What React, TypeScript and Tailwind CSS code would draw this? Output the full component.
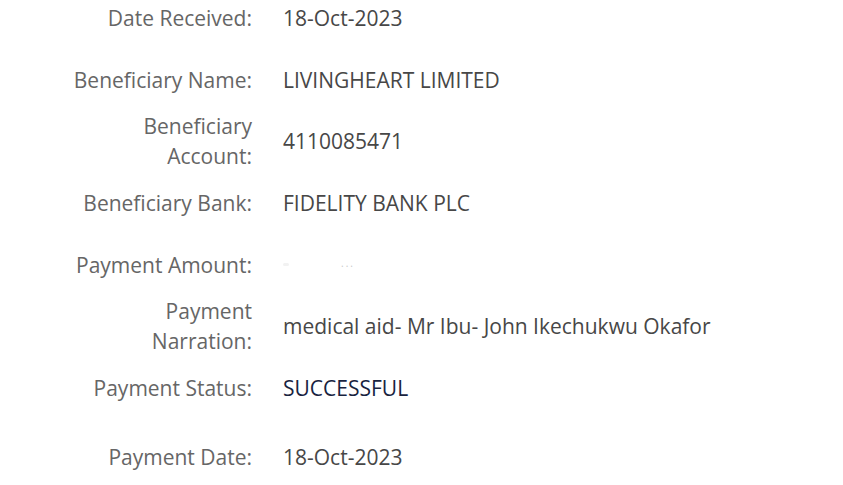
import React from "react";

type Row = { label: string; value: React.ReactNode; extra?: string };

const rows: Row[] = [
  { label: "Date Received:", value: "18-Oct-2023" },
  { label: "Beneficiary Name:", value: "LIVINGHEART LIMITED" },
  { label: "Beneficiary Account:", value: "4110085471" },
  { label: "Beneficiary Bank:", value: "FIDELITY BANK PLC" },
  {
    label: "Payment Amount:",
    value: (
      <span className="flex items-center">
        <span className="inline-block w-[6px] h-[3px] rounded-full bg-[#f2f2f2]" />
        <span className="ml-[52px] text-[10px] leading-none tracking-[2px] text-[#c8c8c8] -mt-[4px]">...</span>
      </span>
    ),
  },
  {
    label: "Payment Narration:",
    value: "medical aid- Mr Ibu- John Ikechukwu Okafor",
  },
  { label: "Payment Status:", value: <span className="font-medium text-[#18233f]">SUCCESSFUL</span> },
  { label: "Payment Date:", value: "18-Oct-2023", extra: "mt-[7px]" },
];

export default function App() {
  return (
    <div
      className="w-[843px] h-[485px] overflow-hidden bg-white"
      style={{ fontFamily: '"Open Sans", "Noto Sans", sans-serif' }}
    >
      <div className="flex flex-col -mt-[13px]">
        {rows.map((r) => (
          <div key={r.label} className={`flex items-center h-[61.7px] ${r.extra ?? ""}`}>
            <div className="w-[182px] ml-[70px] text-right text-[21px] leading-[30px] text-[#666666]">
              {r.label}
            </div>
            <div className="ml-[31px] text-[21px] leading-[30px] text-[#474747]">{r.value}</div>
          </div>
        ))}
      </div>
    </div>
  );
}
